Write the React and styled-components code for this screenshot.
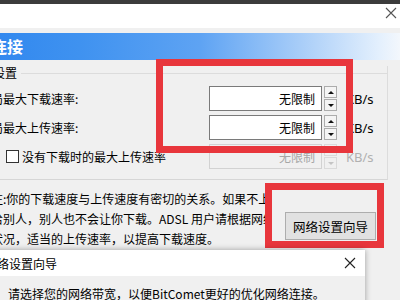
import React from "react";
import styled, { createGlobalStyle } from "styled-components";

const GlobalStyle = createGlobalStyle`
  html, body { margin: 0; padding: 0; background: #f0f0f0; }
  body {
    font-family: "Noto Sans CJK SC", "Noto Sans", sans-serif;
    font-size: 12px;
    color: #000;
  }
`;

const limits = [
  { label: "全局最大下载速率:", value: "无限制" },
  { label: "全局最大上传速率:", value: "无限制" },
];

const note = [
  "注:你的下载速度与上传速度有密切的关系。如果不上传",
  "给别人，别人也不会让你下载。ADSL 用户请根据网络",
  "状况，适当的上传速率，以提高下载速度。",
];

const CloseIcon = ({ color = "#444" }) => (
  <svg width="12" height="12" viewBox="0 0 12 12">
    <path d="M1 1 L11 11 M11 1 L1 11" stroke={color} strokeWidth="1.1" fill="none" />
  </svg>
);

const App = () => {
  return (
    <>
      <GlobalStyle />
      <Screen>
        <TopStrip />
        <TitleBar>
          <CloseIcon color="#555" />
        </TitleBar>
        <Window>
          <Header>连接</Header>
          <GroupBox>
            <GroupHead>
              <GroupTitle>速度设置</GroupTitle>
              <GroupRule />
            </GroupHead>
            <FieldGrid>
              {limits.map((row) => (
                <React.Fragment key={row.label}>
                  <Label>{row.label}</Label>
                  <Field>{row.value}</Field>
                  <Spinner>
                    <SpinButton $dir="up" />
                    <SpinButton $dir="down" />
                  </Spinner>
                  <Unit>KB/s</Unit>
                </React.Fragment>
              ))}
              <CheckLabel>
                <CheckBox />
                没有下载时的最大上传速率
              </CheckLabel>
              <Field $disabled>无限制</Field>
              <Spinner>
                <SpinButton $dir="up" $disabled />
                <SpinButton $dir="down" $disabled />
              </Spinner>
              <Unit $disabled>KB/s</Unit>
            </FieldGrid>
          </GroupBox>
          <Lower>
            <Note>
              {note.map((line) => (
                <NoteLine key={line}>{line}</NoteLine>
              ))}
            </Note>
            <WizardButton>网络设置向导</WizardButton>
          </Lower>
        </Window>

        <Marker $left={156} $top={59} $w={197} $h={94} />
        <Marker $left={265} $top={183} $w={119} $h={65} />

        <Dialog>
          <DialogTitle>
            <span>网络设置向导</span>
            <CloseIcon color="#222" />
          </DialogTitle>
          <DialogBody>请选择您的网络带宽，以便BitComet更好的优化网络连接。</DialogBody>
        </Dialog>
      </Screen>
    </>
  );
};

export default App;

const Screen = styled.div`
  position: relative;
  width: 400px;
  height: 300px;
  overflow: hidden;
  background: #f0f0f0;
`;
const TopStrip = styled.div`
  height: 4px;
  background: #3c3c3c;
`;
const TitleBar = styled.div`
  height: 24px;
  background: #fff;
  display: flex;
  justify-content: flex-end;
  align-items: flex-start;
  padding: 3px 3px 0 0;
  box-sizing: border-box;
`;
const Window = styled.div`
  margin-left: -40px;
  width: 440px;
  padding-top: 5px;
`;
const Header = styled.div`
  height: 27px;
  line-height: 27px;
  padding-left: 31px;
  font-size: 16px;
  font-weight: bold;
  color: #fff;
  background: linear-gradient(
    to right,
    #2c84ee 0,
    #3f92f0 120px,
    #5ea3f3 240px,
    #a8cdf8 340px,
    #e4f0fd 420px,
    #f3f7fc 440px
  );
`;
const GroupBox = styled.div`
  margin: 6px 12px 0 0;
  padding-bottom: 10px;
  border-right: 1px solid #dcdcdc;
  border-bottom: 1px solid #d6d6d6;
`;
const GroupHead = styled.div`
  display: flex;
  align-items: center;
  height: 14px;
  padding-left: 9px;
`;
const GroupTitle = styled.span`
  font-size: 12px;
  line-height: 14px;
`;
const GroupRule = styled.div`
  flex: 1;
  height: 1px;
  margin-left: 4px;
  background: #dcdcdc;
`;
const FieldGrid = styled.div`
  display: grid;
  grid-template-columns: 230px 113px 15px auto;
  grid-auto-rows: 25px;
  row-gap: 4px;
  margin-top: 6px;
  padding-left: 19px;
  align-items: center;
`;
const Label = styled.div`
  white-space: nowrap;
  line-height: 16px;
`;
const CheckLabel = styled.label`
  display: flex;
  align-items: center;
  gap: 3px;
  padding-left: 27px;
  white-space: nowrap;
  line-height: 16px;
`;
const CheckBox = styled.span`
  width: 11px;
  height: 11px;
  border: 1px solid #333;
  background: #fff;
  flex: none;
`;
const Field = styled.div`
  height: 25px;
  box-sizing: border-box;
  border: 1px solid ${(p) => (p.$disabled ? "#d2d2d2" : "#7a7a7a")};
  background: ${(p) => (p.$disabled ? "#f0f0f0" : "#fff")};
  color: ${(p) => (p.$disabled ? "#a6a6a6" : "#000")};
  text-align: right;
  padding-right: 6px;
  line-height: 23px;
`;
const Spinner = styled.div`
  display: flex;
  flex-direction: column;
  gap: 1px;
  height: 25px;
  margin-left: 2px;
  width: 13px;
`;
const SpinButton = styled.div`
  flex: 1;
  box-sizing: border-box;
  border: 1px solid ${(p) => (p.$disabled ? "#dadada" : "#acacac")};
  background: ${(p) => (p.$disabled ? "#f0f0f0" : "#f4f4f4")};
  display: flex;
  align-items: center;
  justify-content: center;
  &::after {
    content: "";
    border-left: 3px solid transparent;
    border-right: 3px solid transparent;
    ${(p) => (p.$dir === "up" ? "border-bottom" : "border-top")}: 3px solid
      ${(p) => (p.$disabled ? "#c4c4c4" : "#111")};
  }
`;
const Unit = styled.div`
  padding-left: 9px;
  white-space: nowrap;
  font-family: "Noto Sans", "Noto Sans CJK SC", sans-serif;
  font-size: 13px;
  color: ${(p) => (p.$disabled ? "#b0b0b0" : "#000")};
`;
const Lower = styled.div`
  display: flex;
  align-items: flex-start;
  padding-top: 9px;
`;
const Note = styled.div`
  width: 280px;
  margin-left: 31px;
  overflow: hidden;
`;
const NoteLine = styled.div`
  white-space: nowrap;
  line-height: 20px;
  height: 20px;
`;
const WizardButton = styled.button`
  margin: 23px 0 0 14px;
  width: 91px;
  height: 28px;
  padding: 0;
  border: 1px solid #adadad;
  background: #e1e1e1;
  font-family: "Noto Sans CJK SC", sans-serif;
  font-size: 12.5px;
  color: #000;
`;
const Marker = styled.div`
  position: absolute;
  left: ${(p) => p.$left}px;
  top: ${(p) => p.$top}px;
  width: ${(p) => p.$w}px;
  height: ${(p) => p.$h}px;
  box-sizing: border-box;
  border: 7px solid #e8363c;
`;
const Dialog = styled.div`
  position: absolute;
  left: -100px;
  top: 250px;
  width: 465px;
  height: 80px;
  background: #f0f0f0;
  box-shadow: 0 0 6px rgba(0, 0, 0, 0.35);
`;
const DialogTitle = styled.div`
  height: 26px;
  background: #fff;
  display: flex;
  align-items: center;
  justify-content: space-between;
  padding: 0 9px 0 85px;
  font-size: 12px;
`;
const DialogBody = styled.div`
  padding: 10px 0 0 108px;
  white-space: nowrap;
  line-height: 16px;
`;
